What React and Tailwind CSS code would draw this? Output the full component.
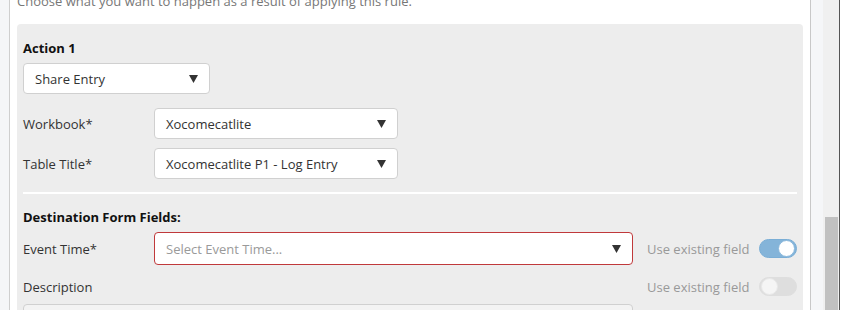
import React from 'react';

const Arrow = () => (
  <svg width="9" height="8" viewBox="0 0 9 8" className="shrink-0">
    <path d="M0 0 L9 0 L4.5 8 Z" fill="#333" />
  </svg>
);

const Select = ({ value, placeholder, className = '', error }) => (
  <div
    className={`flex items-center justify-between rounded-[4px] border bg-white pl-[11px] pr-[11px] ${
      error ? 'border-[#c0393b]' : 'border-[#d0d0d0]'
    } ${className}`}
  >
    <span className={value ? 'text-[#333]' : 'text-[#9a9a9a]'}>{value || placeholder}</span>
    <Arrow />
  </div>
);

const Toggle = ({ on }) => (
  <div
    className={`flex h-[19px] w-[38px] items-center rounded-full border px-[1px] ${
      on ? 'justify-end border-[#7aaed6] bg-[#84b4d9]' : 'justify-start border-[#dedede] bg-[#dedede]'
    }`}
  >
    <div
      className={`h-[17px] w-[17px] rounded-full ${
        on ? 'bg-white border border-[#8ab8dc]' : 'bg-[#f5f5f5] border border-[#e8e8e8]'
      }`}
    />
  </div>
);

const UseExisting = ({ on }) => (
  <div className="flex w-[150px] items-center justify-between">
    <span className="text-[#999]">Use existing field</span>
    <Toggle on={on} />
  </div>
);

const App = () => {
  return (
    <div
      className="flex h-[310px] w-[841px] overflow-hidden bg-white text-[13px] leading-[18px] text-[#333]"
      style={{ fontFamily: '"Open Sans", "Noto Sans", sans-serif' }}
    >
      <div className="w-[10px] shrink-0 border-r border-[#cfcfcf] bg-[#f5f6f8]" />

      <div className="w-[800px] shrink-0 px-[7px]">
        <p className="mt-[-8px] h-[18px] text-[#777]">Choose what you want to happen as a result of applying this rule.</p>

        <div className="mt-[14px] rounded-t-[4px] bg-[#ededed] px-[6px] pt-[15px] pb-4">
          <h3 className="h-[18px] font-bold text-[#111]">Action 1</h3>
          <Select value="Share Entry" className="mt-[6px] h-[31px] w-[187px]" />

          <div className="mt-[14px] flex flex-col gap-[9px]">
            <div className="flex items-center">
              <span className="w-[131px]">Workbook*</span>
              <Select value="Xocomecatlite" className="h-[31px] w-[244px]" />
            </div>
            <div className="flex items-center">
              <span className="w-[131px]">Table Title*</span>
              <Select value="Xocomecatlite P1 - Log Entry" className="h-[31px] w-[244px]" />
            </div>
          </div>

          <div className="mt-[13px] h-[2px] bg-white" />

          <h3 className="mt-[14px] h-[18px] font-bold text-[#111]">Destination Form Fields:</h3>

          <div className="mt-[6px] flex items-center">
            <span className="w-[131px]">Event Time*</span>
            <Select placeholder="Select Event Time..." error className="h-[33px] w-[479px]" />
            <div className="ml-[14px]">
              <UseExisting on />
            </div>
          </div>

          <div className="mt-[12px] flex h-[19px] items-center">
            <span className="w-[624px]">Description</span>
            <UseExisting on={false} />
          </div>

          <div className="mt-[8px] h-[32px] w-[610px] rounded-[4px] border border-[#d0d0d0] bg-[#f3f3f3]" />
        </div>
      </div>

      <div className="w-[13px] shrink-0 border-l border-[#c8c8c8] bg-[#f5f6f8]" />

      <div className="flex w-[17px] shrink-0 flex-col border-r border-[#555] bg-[#f0f0f0] pl-[2px] pr-[1px]">
        <div className="mt-[217px] flex-1 bg-[#c1c1c1]" />
      </div>
    </div>
  );
};

export default App;
